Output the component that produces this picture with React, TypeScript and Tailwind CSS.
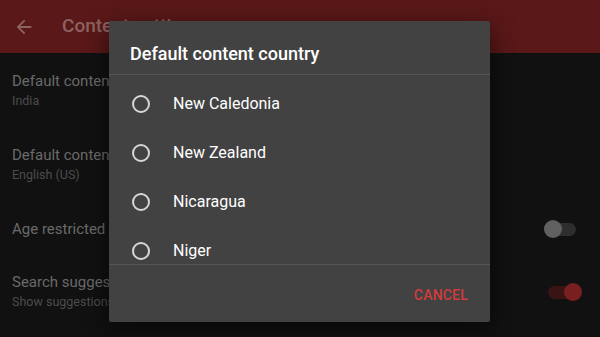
import React from 'react';

const countries = ['New Caledonia', 'New Zealand', 'Nicaragua', 'Niger', 'Nigeria'];

function Toggle({ on }: { on: boolean }) {
  return (
    <div className="relative w-[34px] h-[20px] flex items-center">
      <div className={`w-[32px] h-[13px] rounded-full ${on ? 'bg-[#3a1414]' : 'bg-[#2e2e2e]'}`} />
      <div
        className={`absolute top-[1px] w-[18px] h-[18px] rounded-full ${on ? 'right-0 bg-[#7a1f1f]' : 'left-0 bg-[#606060]'}`}
      />
    </div>
  );
}

export default function App() {
  return (
    <div className="relative w-[600px] h-[337px] overflow-hidden bg-[#111111] font-['Roboto',sans-serif]">
      {/* app bar (dimmed by the dialog scrim) */}
      <div className="h-[53px] bg-[#5a1818] flex items-center px-[12px]">
        <svg width="22" height="22" viewBox="0 0 24 24" className="ml-[1px]">
          <path d="M20 11H7.83l5.59-5.59L12 4l-8 8 8 8 1.41-1.41L7.83 13H20v-2z" fill="#8f6262" />
        </svg>
        <span className="ml-[27px] text-[19px] text-[#8f6262] font-medium">Content settings</span>
      </div>

      {/* settings list */}
      <div className="px-[12px]">
        <div className="pt-[18px] h-[74px]">
          <div className="text-[15px] leading-[20px] text-[#6a6a6a]">Default content location</div>
          <div className="text-[12.5px] leading-[20px] text-[#4c4c4c]">India</div>
        </div>
        <div className="pt-[18px] h-[74px]">
          <div className="text-[15px] leading-[20px] text-[#6a6a6a]">Default content language</div>
          <div className="text-[12.5px] leading-[20px] text-[#4c4c4c]">English (US)</div>
        </div>
        <div className="h-[56px] flex items-center justify-between pr-[10px]">
          <div className="text-[15px] text-[#6a6a6a]">Age restricted content</div>
          <Toggle on={false} />
        </div>
        <div className="pt-[15px] flex items-center justify-between pr-[6px]">
          <div>
            <div className="text-[15px] leading-[20px] text-[#6a6a6a]">Search suggestions</div>
            <div className="text-[12.5px] leading-[20px] text-[#4c4c4c]">Show suggestions when searching</div>
          </div>
          <Toggle on={true} />
        </div>
      </div>

      {/* dialog */}
      <div className="absolute left-[109px] top-[21px] w-[381px] h-[301px] bg-[#424242] rounded-[2px] shadow-[0_8px_24px_rgba(0,0,0,0.6)] flex flex-col">
        <div className="h-[54px] flex items-center px-[21px] pt-[11px] border-b border-[#555555]">
          <span className="text-[18px] font-medium text-white">Default content country</span>
        </div>
        <div className="h-[190px] overflow-hidden pt-[4px] border-b border-[#555555]">
          {countries.map((c) => (
            <div key={c} className="h-[49px] flex items-center pl-[23px]">
              <div className="w-[18px] h-[18px] rounded-full border-2 border-[#d6d6d6]" />
              <span className="ml-[23px] text-[16px] text-white">{c}</span>
            </div>
          ))}
        </div>
        <div className="flex-1 flex items-center justify-end pr-[22px] pt-[3px]">
          <span className="text-[14px] font-medium text-[#d23b3b] tracking-[0.2px]">CANCEL</span>
        </div>
      </div>
    </div>
  );
}
